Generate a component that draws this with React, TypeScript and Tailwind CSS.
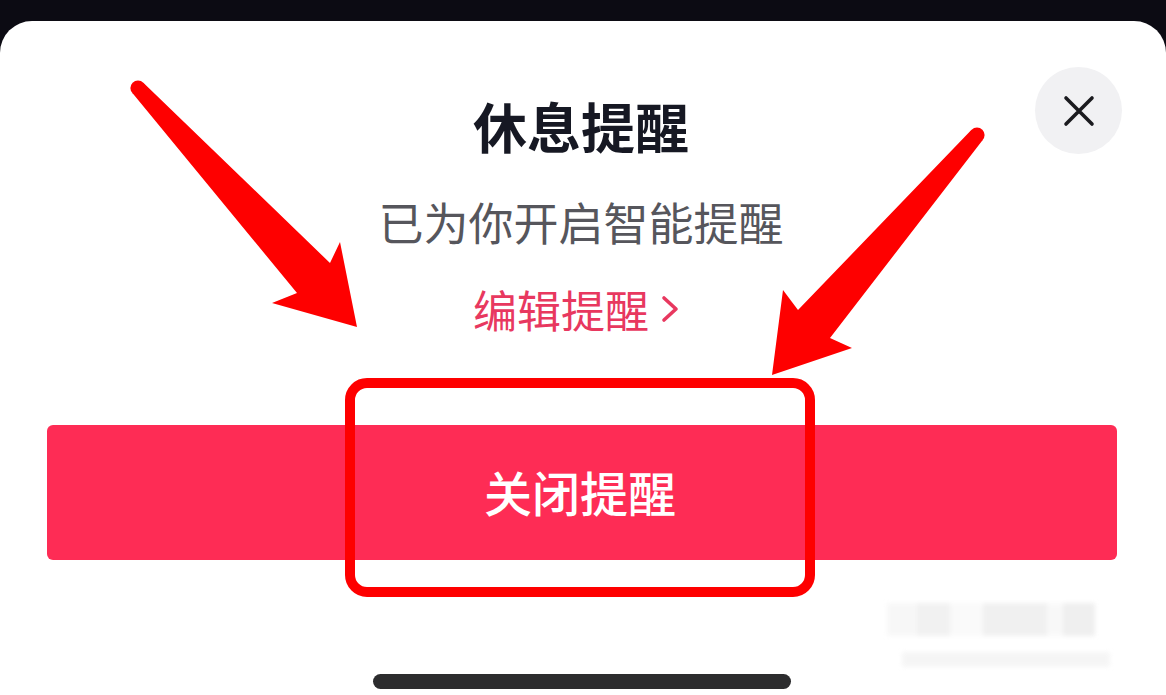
import React from "react";

const cjk = { fontFamily: '"Noto Sans CJK SC", "Noto Sans", sans-serif' };

function CloseIcon() {
  return (
    <svg width="32" height="32" viewBox="0 0 32 32" fill="none">
      <path d="M3 3 L29 29 M29 3 L3 29" stroke="#1b1b1f" strokeWidth="3.6" strokeLinecap="round" />
    </svg>
  );
}

function Chevron() {
  return (
    <svg width="22" height="30" viewBox="0 0 22 30" fill="none">
      <path d="M5 4 L17 15 L5 26" stroke="#e8385f" strokeWidth="3.6" strokeLinecap="round" strokeLinejoin="round" />
    </svg>
  );
}

// Annotation arrows drawn over the sheet
function Arrows() {
  return (
    <svg className="absolute inset-0 pointer-events-none" width="1166" height="695" viewBox="0 0 1166 695">
      <g fill="#fe0000">
        <circle cx="138" cy="88" r="7.6" />
        <polygon points="143.6,82.9 330,263 340,242 357,327 272,303 297,293 132.4,93.1" />
        <circle cx="977" cy="135" r="7.6" />
        <polygon points="971.3,130.1 798,310 783,290 772,375 852,348 830,338 982.7,139.9" />
      </g>
    </svg>
  );
}

export default function App() {
  return (
    <div className="relative w-[1166px] h-[695px] overflow-hidden bg-[#0c0b13]" style={cjk}>
      <div className="relative mt-[21px] h-[674px] bg-white rounded-t-[32px] flex flex-col items-center">
        <button className="absolute top-[46px] right-[44px] w-[87px] h-[87px] rounded-full bg-[#f1f1f3] flex items-center justify-center">
          <CloseIcon />
        </button>

        <h1 className="mt-[78px] text-[54px] leading-[54px] font-semibold text-[#161823] mr-[4px]">
          休息提醒
        </h1>
        <p className="mt-[46px] text-[45px] leading-[45px] text-[#56565c] mr-[4px]">已为你开启智能提醒</p>
        <div className="mt-[43px] flex items-center gap-[10px] text-[44px] leading-[44px] text-[#e8385f] mr-[12px]">
          <span>编辑提醒</span>
          <Chevron />
        </div>

        <button className="mt-[94px] w-[1070px] h-[135px] mr-[2px] rounded-[6px] bg-[#fe2c55] flex items-center justify-center">
          <span className="text-[48px] leading-[48px] font-medium text-white mr-[4px] mb-[4px]">关闭提醒</span>
        </button>

        <div className="mt-[114px] w-[418px] h-[15px] rounded-full bg-[#2c2c2e] mr-[2px]" />
      </div>

      {/* faint blurred mark in the lower right */}
      <div className="absolute left-[887px] top-[603px] flex blur-[2px] opacity-60">
        <div className="w-[30px] h-[33px] bg-[#f3f3f3]" />
        <div className="w-[33px] h-[33px] bg-[#e9e9e9]" />
        <div className="w-[33px] h-[33px] bg-[#f7f7f7]" />
        <div className="w-[64px] h-[33px] bg-[#e7e7e7]" />
        <div className="w-[16px] h-[33px] bg-[#f5f5f5]" />
        <div className="w-[32px] h-[33px] bg-[#e5e5e5]" />
      </div>
      <div className="absolute left-[902px] top-[652px] w-[208px] h-[15px] bg-[#f0f0f0] blur-[2px] opacity-60" />

      <div className="absolute left-[345px] top-[378px] w-[470px] h-[219px] rounded-[22px] border-[10px] border-[#fe0000] pointer-events-none" />
      <Arrows />
    </div>
  );
}
